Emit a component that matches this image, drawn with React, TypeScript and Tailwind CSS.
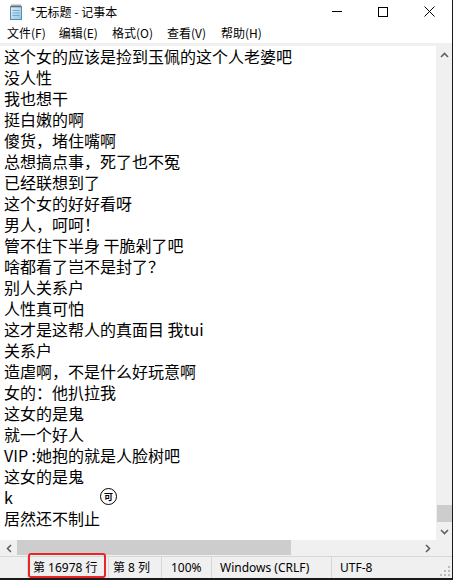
import React from "react";

const lines = [
  "这个女的应该是捡到玉佩的这个人老婆吧",
  "没人性",
  "我也想干",
  "挺白嫩的啊",
  "傻货，堵住嘴啊",
  "总想搞点事，死了也不冤",
  "已经联想到了",
  "这个女的好好看呀",
  "男人，呵呵！",
  "管不住下半身 干脆剁了吧",
  "啥都看了岂不是封了？",
  "别人关系户",
  "人性真可怕",
  "这才是这帮人的真面目 我tui",
  "关系户",
  "造虐啊，不是什么好玩意啊",
  "女的：他扒拉我",
  "这女的是鬼",
  "就一个好人",
  "VIP :她抱的就是人脸树吧",
  "这女的是鬼",
  "k",
  "居然还不制止",
];

const ui = { fontFamily: '"Noto Sans", "Noto Sans CJK SC", sans-serif' };
const cjk = { fontFamily: '"Noto Sans CJK SC", "Noto Sans", sans-serif' };

function NotepadIcon() {
  return (
    <svg width="14" height="16" viewBox="0 0 14 16">
      <defs>
        <linearGradient id="pg" x1="0" y1="0" x2="1" y2="1">
          <stop offset="0" stopColor="#dff1fb" />
          <stop offset="1" stopColor="#8fc3e3" />
        </linearGradient>
      </defs>
      <rect x="1.5" y="2.5" width="11" height="13" fill="url(#pg)" stroke="#5a8bb0" />
      <line x1="3.5" y1="6.5" x2="10.5" y2="6.5" stroke="#7aa7c7" />
      <line x1="3.5" y1="9" x2="10.5" y2="9" stroke="#7aa7c7" />
      <line x1="3.5" y1="11.5" x2="10.5" y2="11.5" stroke="#7aa7c7" />
      {[3, 5, 7, 9, 11].map((x) => (
        <rect key={x} x={x - 0.5} y="0.5" width="1" height="3" fill="#555" />
      ))}
    </svg>
  );
}

export default function App() {
  return (
    <div className="w-[453px] h-[580px] bg-white relative overflow-hidden flex flex-col border-r border-r-[#1a1a1a] border-b-2 border-b-[#1a1a1a]">
      {/* Title bar */}
      <div className="h-[23px] flex items-center shrink-0" style={cjk}>
        <div className="ml-[9px] mt-[1px]"><NotepadIcon /></div>
        <div className="ml-[7px] text-[12px] text-black leading-none">*无标题 - 记事本</div>
        <div className="ml-auto flex items-center h-full">
          <div className="w-[46px] flex justify-center"><div className="w-[10px] h-px bg-black" /></div>
          <div className="w-[46px] flex justify-center"><div className="w-[10px] h-[10px] border border-black" /></div>
          <div className="w-[46px] flex justify-center">
            <svg width="11" height="11" viewBox="0 0 11 11"><path d="M0.5 0.5 L10.5 10.5 M10.5 0.5 L0.5 10.5" stroke="#000" strokeWidth="1" /></svg>
          </div>
        </div>
      </div>
      {/* Menu bar */}
      <div className="h-[20px] flex items-center text-[12px] text-black shrink-0" style={cjk}>
        <span className="ml-[7px]">文件(F)</span>
        <span className="ml-[13px]">编辑(E)</span>
        <span className="ml-[14px]">格式(O)</span>
        <span className="ml-[14px]">查看(V)</span>
        <span className="ml-[15px]">帮助(H)</span>
      </div>
      <div className="h-[3px] bg-[#f0f0f0] shrink-0" />
      {/* Editor area */}
      <div className="flex flex-1 min-h-0 overflow-hidden">
        <div className="flex-1 pl-[4px] text-[16px] leading-[21px] text-black whitespace-pre overflow-hidden" style={cjk}>
          {lines.map((l, i) => (
            <div key={i}>{l}</div>
          ))}
        </div>
        <div className="w-[16px] bg-[#f0f0f0] flex flex-col items-center">
          <div className="h-[17px] flex items-center justify-center shrink-0">
            <svg width="9" height="6" viewBox="0 0 9 6"><path d="M1 5 L4.5 1.5 L8 5" stroke="#606060" strokeWidth="1.6" fill="none" /></svg>
          </div>
          <div className="flex-1 w-full flex flex-col justify-end">
            <div className="h-[17px] w-[15px] ml-[1px] bg-[#cdcdcd] mb-[1px]" />
          </div>
          <div className="h-[17px] flex items-center justify-center shrink-0">
            <svg width="9" height="6" viewBox="0 0 9 6"><path d="M1 1 L4.5 4.5 L8 1" stroke="#606060" strokeWidth="1.6" fill="none" /></svg>
          </div>
        </div>
      </div>
      {/* Horizontal scrollbar */}
      <div className="h-[16px] flex bg-[#f0f0f0] shrink-0">
        <div className="w-[17px] flex items-center justify-center">
          <svg width="6" height="9" viewBox="0 0 6 9"><path d="M5 1 L1.5 4.5 L5 8" stroke="#606060" strokeWidth="1.6" fill="none" /></svg>
        </div>
        <div className="w-[274px] h-[15px] bg-[#cdcdcd]" />
        <div className="flex-1" />
        <div className="w-[17px] flex items-center justify-center">
          <svg width="6" height="9" viewBox="0 0 6 9"><path d="M1 1 L4.5 4.5 L1 8" stroke="#606060" strokeWidth="1.6" fill="none" /></svg>
        </div>
        <div className="w-[16px]" />
      </div>
      {/* Status bar */}
      <div className="h-[22px] shrink-0 bg-[#f0f0f0] border-t border-t-[#d7d7d7] flex items-stretch text-[12px] text-black relative" style={ui}>
        <div className="w-[27px]" />
        <div className="w-px bg-[#d7d7d7]" />
        <div className="w-[80px] flex items-center pl-[5px]">第 16978 行</div>
        <div className="w-px bg-[#d7d7d7]" />
        <div className="w-[52px] flex items-center pl-[4px]">第 8 列</div>
        <div className="w-px bg-[#d7d7d7]" />
        <div className="w-[49px] flex items-center pl-[9px]">100%</div>
        <div className="w-px bg-[#d7d7d7]" />
        <div className="w-[119px] flex items-center pl-[8px]">Windows (CRLF)</div>
        <div className="w-px bg-[#d7d7d7]" />
        <div className="flex-1 flex items-center pl-[8px]">UTF-8</div>
        <div className="absolute right-[2px] bottom-[2px]">
          <svg width="10" height="10" viewBox="0 0 10 10" fill="#bcbcbc">
            <rect x="8" y="0" width="2" height="2" />
            <rect x="4" y="4" width="2" height="2" />
            <rect x="8" y="4" width="2" height="2" />
            <rect x="0" y="8" width="2" height="2" />
            <rect x="4" y="8" width="2" height="2" />
            <rect x="8" y="8" width="2" height="2" />
          </svg>
        </div>
        <div className="absolute left-[28px] top-[-4px] w-[78px] h-[25px] border-2 border-[#e8262a] rounded-[3px]" />
      </div>
      {/* IME indicator */}
      <div className="absolute left-[100px] top-[488px] w-[17px] h-[17px] rounded-full border-[1.5px] border-black bg-white flex items-center justify-center text-[9px] font-bold leading-none" style={cjk}>
        可
      </div>
    </div>
  );
}
